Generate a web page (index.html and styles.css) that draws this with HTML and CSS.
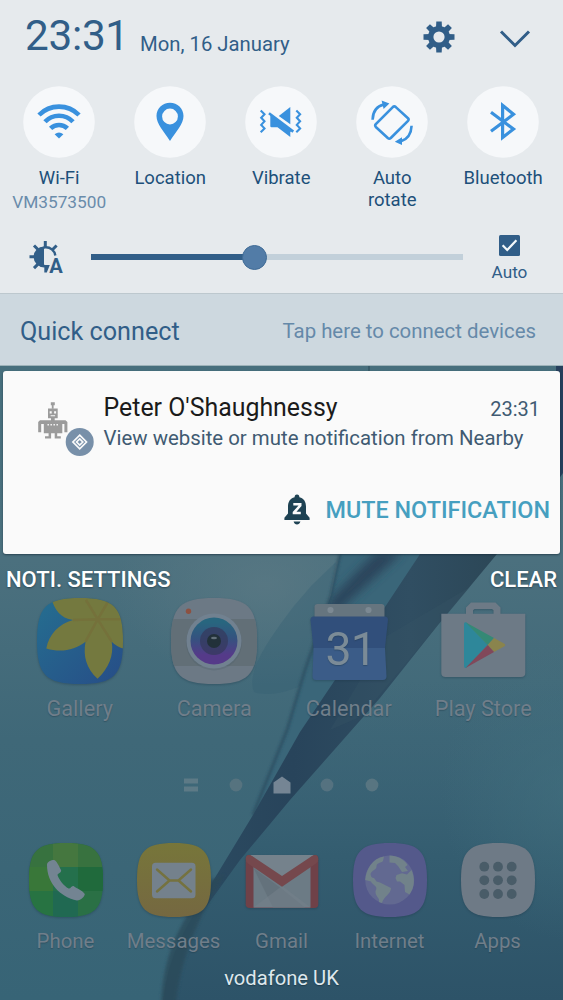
FILE: index.html
```html
<!DOCTYPE html>
<html lang="en">
<head>
<meta charset="utf-8">
<title>Notifications</title>
<link rel="stylesheet" href="styles.css">
</head>
<body>
<div class="screen">
  <svg class="wallpaper" viewBox="0 0 563 1000" aria-hidden="true">
    <defs>
      <linearGradient id="base" x1="0" y1="0" x2="0" y2="1"><stop offset=".36" stop-color="#476f7d"/><stop offset=".56" stop-color="#4b707e"/><stop offset=".74" stop-color="#3f6878"/><stop offset="1" stop-color="#376476"/></linearGradient>
      <linearGradient id="deep" x1="0" y1="0" x2="0" y2="1"><stop offset="0" stop-color="#3c6477" stop-opacity="0"/><stop offset=".55" stop-color="#345d70"/><stop offset="1" stop-color="#2d5368"/></linearGradient>
      <linearGradient id="band" x1="0" y1="0" x2="1" y2="0"><stop offset="0" stop-color="#2b4a60"/><stop offset=".3" stop-color="#28445b"/><stop offset=".7" stop-color="#304e62"/><stop offset="1" stop-color="#2c4757"/></linearGradient>
      <radialGradient id="glow"><stop offset="0" stop-color="#5b7984" stop-opacity=".75"/><stop offset="1" stop-color="#5b7984" stop-opacity="0"/></radialGradient>
      <radialGradient id="rim"><stop offset="0" stop-color="#42707f" stop-opacity=".6"/><stop offset="1" stop-color="#42707f" stop-opacity="0"/></radialGradient>
      <filter id="soft" x="-40%" y="-40%" width="180%" height="180%"><feGaussianBlur stdDeviation="5"/></filter>
      <filter id="soft2" x="-40%" y="-40%" width="180%" height="180%"><feGaussianBlur stdDeviation="1.5"/></filter>
      <clipPath id="fold"><path d="M340 554H420L394 595 300 732 253 815 287 730 305 670 331 595Z"/></clipPath>
    </defs>
    <rect width="563" height="1000" fill="url(#base)"/>
    <ellipse cx="265" cy="585" rx="150" ry="100" fill="url(#glow)"/>
    <path d="M563 680H395L290 800 212 890Q170 940 163 1000H563Z" fill="url(#deep)"/>
    <ellipse cx="570" cy="790" rx="130" ry="150" fill="url(#rim)"/>
    <path d="M369 366H557L563 380V366Z" fill="#3c6570"/>
    <path d="M369 366v5" stroke="#2b4a58"/>
    <path d="M556 366H563V473L558 480Z" fill="#263f5c"/>
    <path d="M254 692C246 672 268 640 294 606L312 585 336 562 328 605C322 640 314 662 306 683 290 692 268 697 254 692Z" fill="#345e72" opacity=".35"/>
    <path d="M340 554H420L394 595 300 732 253 815 287 730 305 670 331 595Z" fill="#3a6679"/>
    <path d="M403 552 350 600 325 625 330 600 376 552Z" fill="#29455b" filter="url(#soft)" clip-path="url(#fold)"/>
    <path d="M340 554 331 595 305 670 287 730 253 815" fill="none" stroke="#284a5d" stroke-width="2.2" filter="url(#soft2)"/>
    <path d="M420 554H497L438 625 380 698 290 800 240 860 206 907Q207 893 213 881L253 815 300 732 335 680 385 607Z" fill="url(#band)"/>
    <path d="M387 636 470 587 438 625 400 670 362 716 330 730Z" fill="#385567" opacity=".3"/>
    <path d="M225 875C205 905 182 950 176 1003H161C164 950 180 925 209 880Z" fill="#2b4959" opacity=".75" filter="url(#soft2)"/>
  </svg>

  <section class="shade">
    <header class="top">
      <span class="clock">23:31</span>
      <span class="date">Mon, 16 January</span>
      <svg class="gear" viewBox="-16 -16 32 32"><g fill="#315e88"><path id="tooth" d="M-2.700-15.500H2.700L3-9H-3Z"/><use href="#tooth" transform="rotate(45)"/><use href="#tooth" transform="rotate(90)"/><use href="#tooth" transform="rotate(135)"/><use href="#tooth" transform="rotate(180)"/><use href="#tooth" transform="rotate(225)"/><use href="#tooth" transform="rotate(270)"/><use href="#tooth" transform="rotate(315)"/></g><circle r="8.300" fill="none" stroke="#315e88" stroke-width="5.400"/></svg>
      <svg class="chevron" viewBox="0 0 32 20"><path d="M2 2.500 16 16.500 30 2.500" fill="none" stroke="#315e88" stroke-width="3"/></svg>
    </header>

    <div class="toggles">
      <div class="toggle">
        <svg class="disc" viewBox="0 0 72 72"><circle class="plate" cx="36" cy="36" r="35.800"/><g fill="none" stroke="#3991de" stroke-width="4.600"><path d="M16 29A28 28 0 0 1 56 29"/><path d="M22 35.800A19.200 19.200 0 0 1 50 35.800"/><path d="M27.600 42.400A12 12 0 0 1 44.400 42.400"/></g><path d="M31.600 48.200Q36 44.600 40.400 48.200L36 52.600Z" fill="#3991de"/></svg>
        <span class="label">Wi-Fi</span><span class="network">VM3573500</span>
      </div>
      <div class="toggle">
        <svg class="disc" viewBox="0 0 72 72"><circle class="plate" cx="36" cy="36" r="35.800"/><path fill="#3991de" fill-rule="evenodd" d="M36 16.700C28.500 16.700 22.500 22.600 22.500 30 22.500 38 30 45.500 36 55 42 45.500 49.500 38 49.500 30 49.500 22.600 43.500 16.700 36 16.700ZM36 22.600a7.900 7.900 0 1 1 0 15.800 7.900 7.900 0 0 1 0-15.800Z"/></svg>
        <span class="label">Location</span>
      </div>
      <div class="toggle">
        <svg class="disc" viewBox="0 0 72 72"><circle class="plate" cx="36" cy="36" r="35.800"/><g fill="#3991de"><path d="M45.300 21V38.200L33.800 29.900Z"/><path d="M25.300 28.300 47 44.700 45.300 46V51L32.500 41.300H26.500Q25.300 41.300 25.300 40Z"/></g><path d="M24 27.300 48.300 45.600" stroke="#3991de" stroke-width="2.600"/><g fill="none" stroke="#3991de" stroke-width="2.100"><path d="M15.700 24.500 19.500 28.200 16.200 31.700 19.500 35.300 16.200 38.900 19.500 42.400 15.700 46.200"/><path d="M51.300 24.500 55.100 28.200 51.800 31.700 55.100 35.300 51.800 38.900 55.100 42.400 51.300 46.200"/></g></svg>
        <span class="label">Vibrate</span>
      </div>
      <div class="toggle">
        <svg class="disc" viewBox="0 0 72 72"><circle class="plate" cx="36" cy="36" r="35.800"/><g fill="none" stroke="#3991de" stroke-width="2.600"><path stroke-linejoin="round" d="M36.800 21.100Q38.300 19.800 39.800 21.100L52 32.200Q53.200 33.500 52 34.800L34.800 52Q33.300 53.300 31.800 52L19.800 41Q18.600 39.600 19.800 38.200Z"/><path d="M16.600 33.800C16.800 25.500 21 20.200 28 18.600M55.600 39.800C55.200 47.800 51 53.400 45 55.300"/></g><path fill="#3991de" d="M25.600 14.600 33.400 17.600 27.600 23ZM38.800 55.800 46 51.200V59Z"/></svg>
        <span class="label">Auto<br>rotate</span>
      </div>
      <div class="toggle">
        <svg class="disc" viewBox="0 0 72 72"><circle class="plate" cx="36" cy="36" r="35.800"/><path fill="none" stroke="#3991de" stroke-width="3.200" d="M24 26.200 46.500 43 35.600 51.500V19.300L46.500 28.300 24 45.200"/></svg>
        <span class="label">Bluetooth</span>
      </div>
    </div>

    <div class="brightness">
      <svg class="sun" viewBox="0 0 40 34"><g stroke="#315e88" stroke-width="3"><path d="M17.300 1V7M1.500 16.800H8M6 5.500 10 9.500M28.600 5.500 24.600 9.500M6 28.100 10 24.100"/></g><path d="M17.300 26.300A9.500 9.500 0 1 1 27.300 15.500" fill="none" stroke="#315e88" stroke-width="2.400"/><path d="M16 6.400A10.400 10.400 0 0 0 16 27.200Z" fill="#315e88"/><path d="M16.300 25H21.800L18.800 32.500H16.300Z" fill="#315e88"/><text x="21.300" y="32.500" font-size="19.500" font-weight="700" fill="#315e88" textLength="13.500" lengthAdjust="spacingAndGlyphs">A</text></svg>
      <div class="track"><div class="fill"></div><div class="thumb"></div></div>
      <div class="auto">
        <svg class="check" viewBox="0 0 21 21"><rect width="21" height="21" rx="1.500" fill="#315e88"/><path d="M3.600 10.200 8.200 15 17.400 5.300" fill="none" stroke="#f4f8fa" stroke-width="2.200"/></svg>
        <span>Auto</span>
      </div>
    </div>

    <div class="connect"><span class="connect-title">Quick connect</span><span class="connect-hint">Tap here to connect devices</span></div>
  </section>

  <article class="card">
    <div class="card-head">
      <svg class="robot" viewBox="0 0 60 58">
        <g fill="#9b9b9b"><path d="M14.800 2.300h4v3h-1.200v3.500h-1.800V5.300h-1Z"/><path fill-rule="evenodd" d="M12 8.600h9.700v9.600H12ZM13.700 11.200v2.200h2v-2.200ZM18.100 11.200v2.200h2v-2.200ZM14.600 15.300v1h4.500v-1Z"/><path d="M15 18h3.700v3H15Z"/><path fill-rule="evenodd" d="M4 20.200H29.500L31.400 22V32.300H28.400V24H26.300V33.200H7.800V24H5.200V32.300H2.200V22ZM11.500 24v1.400h1.400V24ZM14.500 24v1.400h1.400V24ZM17.500 24v1.400h1.400V24ZM20.500 24v1.400h1.400V24Z"/><path d="M12.600 33h2.500v5.600H9v-2.400h3.600ZM18.700 33h2.500v3.200h3.600v2.400h-6.100Z"/></g>
        <circle cx="43.700" cy="42" r="14" fill="#7890a9"/><g fill="none" stroke="#fafafa" stroke-width="1.700"><path d="M43.700 35.200 50.500 42 43.700 48.800 36.900 42Z"/><path d="M43.700 38.900 46.800 42 43.700 45.100 40.600 42Z"/></g>
      </svg>
      <div class="message">
        <div class="title-line"><span class="title">Peter O'Shaughnessy</span><span class="time">23:31</span></div>
        <p class="body">View website or mute notification from Nearby</p>
      </div>
    </div>
    <div class="mute">
      <svg class="bell" viewBox="0 0 26 32"><path fill="#1e4253" d="M13 .4C14.700.4 15.400 1.600 15.400 3.200 20 4.300 22 8 22 12.500V19.500L25.600 23.800V26H.400V23.800L4 19.500V12.500C4 8 6 4.300 10.600 3.200 10.600 1.600 11.300.4 13 .4ZM9.600 27.600H16.400C15.500 31.500 10.500 31.500 9.600 27.600Z"/><path d="M9.300 10.300H16.200V11.500L10 18.600V19H16.800" fill="none" stroke="#fafafa" stroke-width="2.600"/></svg>
      <span>MUTE NOTIFICATION</span>
    </div>
  </article>

  <div class="actions"><span>NOTI. SETTINGS</span><span>CLEAR</span></div>

  <div class="apps">
    <div class="app">
      <svg viewBox="0 0 86 86"><defs><linearGradient id="ga" x2="1" y2="1"><stop offset=".1" stop-color="#256b8f"/><stop offset="1" stop-color="#274d87"/></linearGradient><clipPath id="sq"><path d="M43 0C77 0 86 9 86 43 86 77 77 86 43 86 9 86 0 77 0 43 0 9 9 0 43 0Z"/></clipPath></defs><g clip-path="url(#sq)"><rect width="86" height="86" fill="url(#ga)"/><path fill="#74793f" d="M14 0C18 12 23 20 36 22 22 26 12 36 9.300 50.500 24 55 38 52 48.500 43.700 46 58 49 70 60.500 80.700 72 70 77 57 74.700 43.700Q80 49 86 50.500V0Z"/><path d="M36 22 60.700 21.300 48.500 43.700M49 2 60.700 21.300 72 2M60.700 21.300H86M60.700 21.300 74.700 43.700" fill="none" stroke="#775f32" stroke-width="2.500" opacity=".3"/></g></svg>
      <span>Gallery</span>
    </div>
    <div class="app">
      <svg viewBox="0 0 86 86"><defs><linearGradient id="lens" x2="0" y2="1"><stop offset=".1" stop-color="#28667f"/><stop offset=".45" stop-color="#35527f"/><stop offset=".8" stop-color="#553a89"/></linearGradient></defs><g clip-path="url(#sq)"><rect width="86" height="86" fill="#6c7985"/><rect y="21" width="86" height="47" fill="#626f77"/></g><circle cx="43" cy="44.500" r="28" fill="#465b69" opacity=".25"/><circle cx="43" cy="43" r="27.500" fill="#718190"/><circle cx="43" cy="43" r="23.500" fill="url(#lens)"/><circle cx="43" cy="43" r="14" fill="#36395e" opacity=".75"/><circle cx="43" cy="43" r="7" fill="#22313a"/><ellipse cx="43" cy="40" rx="3" ry="1.300" fill="#62707a"/><circle cx="17.500" cy="13.300" r="2.700" fill="#8d5141"/></svg>
      <span>Camera</span>
    </div>
    <div class="app">
      <svg viewBox="0 0 86 86"><path d="M8.500 19V9q0-3 3-3h64q3 0 3 3v10Z" fill="#66757f"/><circle cx="24.500" cy="12" r="3.100" fill="#7c8993"/><circle cx="62.500" cy="12" r="3.100" fill="#7c8993"/><path d="M7.500 18.500H79Q82 18.500 82 22L79 50H7.500L4.500 22Q4.500 18.500 7.500 18.500Z" fill="#314f7b"/><path d="M7.500 50H79L80.500 78Q80.500 82 77 82H10Q6.500 82 6.500 78Z" fill="#3b5c88"/><text x="19.500" y="66.500" font-size="46.500" letter-spacing="-1" fill="#7b8b97">31</text></svg>
      <span>Calendar</span>
    </div>
    <div class="app">
      <svg viewBox="0 0 86 86"><path fill="#6d7a86" fill-rule="evenodd" d="M1.300 15.700H26V9.500L31 4.500H55.500L60.500 9.500V15.700H85.300V75Q85.300 79 81 79H5.600Q1.300 79 1.300 75ZM33 15.700H53.500V12.300L52 11H34.500L33 12.300Z"/><path fill="#2e879a" d="M24 26Q24 23.500 26.500 24.500L47.700 47 26.500 69.700Q24 70.500 24 68Z"/><path fill="#358975" d="M25.500 24.200 54 40 47.700 47Z"/><path fill="#8a844d" d="M54 40 64 45.500Q66.500 47 64 48.500L54 54 47.700 47Z"/><path fill="#81485a" d="M25.500 70 54 54 47.700 47Z"/></svg>
      <span>Play Store</span>
    </div>
  </div>

  <div class="pager">
    <svg viewBox="0 0 18 18"><path fill="#5d7a86" d="M2 2.500h14v5H2ZM2 10.500h14v5H2Z"/></svg>
    <svg viewBox="0 0 18 18"><circle cx="9" cy="9" r="6.400" fill="#56737f"/></svg>
    <svg viewBox="0 0 18 18"><path fill="#758594" d="M9 .5 17.500 6.500V17.500H.5V6.500Z"/></svg>
    <svg viewBox="0 0 18 18"><circle cx="9" cy="9" r="6.400" fill="#557280"/></svg>
    <svg viewBox="0 0 18 18"><circle cx="9" cy="9" r="6.400" fill="#587581"/></svg>
  </div>

  <div class="apps dock">
    <div class="app">
      <svg viewBox="0 0 74 74"><defs><clipPath id="sq2"><path d="M37 0C66 0 74 8 74 37 74 66 66 74 37 74 8 74 0 66 0 37 0 8 8 0 37 0Z"/></clipPath></defs><g clip-path="url(#sq2)"><rect width="74" height="74" fill="#2a7045"/><path d="M0 0H24V24H0Z" fill="#37723f"/><path d="M24 0H49V24H24Z" fill="#45773f"/><path d="M49 0H74V24H49Z" fill="#38723f"/><path d="M0 24H24V48H0Z" fill="#397739"/><path d="M24 24H49V48H24Z" fill="#24704c"/><path d="M49 24H74V48H49Z" fill="#206a3c"/><path d="M0 48H24V74H0Z" fill="#277342"/><path d="M24 48H49V74H24Z" fill="#206952"/></g><path fill="#738492" d="M18 22C18 18.500 22 17 25 17 27 17 30 23 32 27 33 29.500 29 30 28.500 32 30 37 35 43 39.500 45.500 42 46 42 42.500 44.500 43 48 45.500 54 48 55.800 51 56 53 52 57.500 48 57.500 31 54 18 40 18 22Z"/></svg>
      <span>Phone</span>
    </div>
    <div class="app">
      <svg viewBox="0 0 74 74"><defs><linearGradient id="ms" x2="0" y2="1"><stop stop-color="#77763a"/><stop offset="1" stop-color="#756841"/></linearGradient></defs><path d="M37 0C66 0 74 8 74 37 74 66 66 74 37 74 8 74 0 66 0 37 0 8 8 0 37 0Z" fill="url(#ms)"/><rect x="15" y="19.700" width="43.500" height="35.500" rx="3.500" fill="#74818c"/><path d="M20 26.500 32.500 37.500H41.500L54 26.500M20 48.500 32.500 37.500M41.500 37.500 54 48.500" fill="none" stroke="#75723f" stroke-width="2.400" stroke-linecap="round"/></svg>
      <span>Messages</span>
    </div>
    <div class="app">
      <svg viewBox="0 0 74 74"><rect x=".7" y="12" width="72.600" height="53" rx="4" fill="#6f4148"/><path d="M8.500 12H65.500V64.500H8.500Z" fill="#6c7b85"/><path d="M8.500 25 37 46 60 64.500H28Z" fill="#64727c"/><path d="M8.500 64.500 37 43 65.500 64.500Z" fill="#75828c" opacity=".5"/><path d="M5 12H69L37 34Z" fill="#75828c"/><path d="M.7 16Q1 10 7 13L37 33 67 13Q73 10 73.300 16 73.300 19 71 20.500L37 43.700 3 20.500Q.7 19 .7 16Z" fill="#75484d"/></svg>
      <span>Gmail</span>
    </div>
    <div class="app">
      <svg viewBox="0 0 74 74"><path d="M37 0C66 0 74 8 74 37 74 66 66 74 37 74 8 74 0 66 0 37 0 8 8 0 37 0Z" fill="#54598b"/><circle cx="36.700" cy="37" r="24.500" fill="#626991"/><path fill="#71828a" d="M12.200 37C13 26 20 15 31 13.500L30 18C28 20 24 19.500 23.500 23 24 27 18.500 27 17.500 31 18 34 19 35 21 35L23.500 38.500 27 39.500 38 45C38 51 31 53 29 60L26 59C27 54 22 54 22.500 48 26 43 19 42 18 38.500ZM36.500 12.600C44 13 51 16 54.500 22L52 24 55 28 49 29 47 26 45 23 42 20 36.500 19.500ZM43.500 32 49 30.300 54 31.500 58.500 27C62 35 62 44 56.500 51.500L52 49 51.500 42 47 38.500 44 38.500 42.500 35Z"/></svg>
      <span>Internet</span>
    </div>
    <div class="app">
      <svg viewBox="0 0 74 74"><path d="M37 0C66 0 74 8 74 37 74 66 66 74 37 74 8 74 0 66 0 37 0 8 8 0 37 0Z" fill="#6e7a86"/><g fill="#495c68"><circle cx="23.300" cy="23.700" r="4.900"/><circle cx="37" cy="23.700" r="4.900"/><circle cx="50.700" cy="23.700" r="4.900"/><circle cx="23.300" cy="37.300" r="4.900"/><circle cx="37" cy="37.300" r="4.900"/><circle cx="50.700" cy="37.300" r="4.900"/><circle cx="23.300" cy="51" r="4.900"/><circle cx="37" cy="51" r="4.900"/><circle cx="50.700" cy="51" r="4.900"/></g></svg>
      <span>Apps</span>
    </div>
  </div>

  <footer class="carrier">vodafone UK</footer>
</div>
</body>
</html>
```
FILE: styles.css
```css
* { box-sizing: border-box; }
body { margin: 0; font-family: Roboto, "Liberation Sans", sans-serif; }
svg { display: block; flex: none; overflow: visible; }
span { white-space: nowrap; }

.screen { position: relative; width: 563px; height: 1000px; overflow: hidden; display: flex; flex-direction: column; background: #41697a; }
.wallpaper { position: absolute; inset: 0; width: 563px; height: 1000px; overflow: hidden; }
.shade, .card, .actions, .apps, .pager, .carrier { position: relative; flex: none; }

.shade { height: 366px; background: #e6eaed; color: #315e88; border-bottom: 1px solid #9db2b9; }
.top { display: flex; height: 86px; padding: 11px 32.5px 0 25px; align-items: flex-start; }
.clock { width: 115px; font-size: 42.3px; letter-spacing: -.3px; line-height: 50px; }
.date { font-size: 20.3px; line-height: 24px; padding-top: 21px; }
.gear { width: 32px; height: 32px; margin: 10px 0 0 auto; }
.chevron { width: 32px; height: 20px; margin: 18px 0 0 44px; }

.toggles { display: grid; grid-template-columns: repeat(5, 111px); height: 141px; padding-left: 3.7px; }
.toggle { display: flex; flex-direction: column; align-items: center; text-align: center; }
.disc { width: 72px; height: 72px; }
.plate { fill: #f6f8fa; }
.label { margin-top: 8.5px; font-size: 18.5px; line-height: 22.5px; color: #1d507a; }
.network { margin-top: 1.5px; font-size: 17.3px; line-height: 22px; color: #6a8cab; }

.brightness { display: flex; height: 66px; padding: 0 0 0 28px; }
.sun { width: 40px; height: 34px; margin-top: 13px; }
.track { position: relative; flex: none; width: 372px; height: 6px; margin: 27px 0 0 23px; background: #c2d0da; }
.fill { width: 163px; height: 6px; background: #315e88; }
.thumb { position: absolute; left: 150.5px; top: -9.5px; width: 25px; height: 25px; border-radius: 50%; background: #527ca7; border: 1px solid #3f6b96; }
.auto { width: 48px; margin-left: 22.5px; padding-top: 8px; display: flex; flex-direction: column; align-items: center; font-size: 17.2px; line-height: 20px; gap: 6px; }
.check { width: 21px; height: 21px; }

.connect { display: flex; align-items: center; justify-content: space-between; height: 72px; padding: 3px 27px 0 20px; background: #cdd8df; border-top: 1px solid #bdc8ce; }
.connect-title { font-size: 25.2px; }
.connect-hint { font-size: 20.4px; }
.connect-hint { color: #6589a9; }

.card { width: 557px; height: 183px; margin: 5px 0 0 3px; padding-top: 23px; background: #fafafa; border-radius: 3px; box-shadow: 0 1px 2px rgba(20, 40, 55, .6); }
.card-head { display: flex; padding: 0 20px 0 33px; height: 98px; }
.robot { width: 60px; height: 58px; margin-top: 6px; }
.message { flex: 1; margin-left: 7.5px; }
.title-line { display: flex; justify-content: space-between; align-items: baseline; height: 30px; line-height: 28px; }
.title { font-size: 24.9px; color: #1b1b1b; }
.time { font-size: 20px; color: #405a72; }
.body { margin: 0; font-size: 20.4px; line-height: 28px; color: #405a72; white-space: nowrap; }
.mute { display: flex; justify-content: flex-end; align-items: center; height: 36px; padding-right: 10px; gap: 15px; font-size: 23.4px; font-weight: 500; color: #469fc0; }
.bell { width: 26px; height: 32px; }

.actions { display: flex; justify-content: space-between; height: 44px; padding: 12px 6px 0; font-size: 22px; line-height: 28px; font-weight: 500; color: #fff; text-shadow: 0 1px 2px rgba(10, 30, 45, .5); }

.apps { display: grid; grid-template-columns: repeat(4, 134.5px); height: 178px; padding-left: 12.5px; font-size: 21.7px; color: #707e8a; text-shadow: 0 1px 1px rgba(30, 55, 70, .4); }
.app { display: flex; flex-direction: column; align-items: center; }
.app > svg { width: 86px; height: 86px; filter: drop-shadow(0 1px 1px rgba(25, 50, 65, .35)); }
.app > span { margin-top: 12px; line-height: 26px; }
.pager { display: flex; justify-content: center; gap: 27.4px; height: 67px; }
.pager svg { width: 18px; height: 18px; }
.dock { grid-template-columns: repeat(5, 108px); height: 122px; padding-left: 11.5px; font-size: 20.4px; }
.dock .app > svg { width: 74px; height: 74px; }
.dock .app > span { margin-top: 11px; }
.carrier { padding-top: 1px; text-align: center; font-size: 20.2px; line-height: 24px; color: #dee8ed; text-shadow: 0 1px 1px rgba(20, 40, 50, .5); }
```
